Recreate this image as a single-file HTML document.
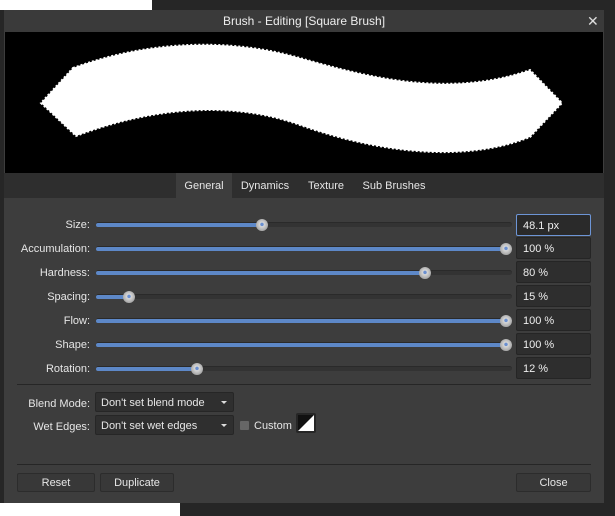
<!DOCTYPE html><html><head><style>
*{margin:0;padding:0;box-sizing:border-box}
body{width:615px;height:516px;background:#262626;position:relative;overflow:hidden;font-family:"Liberation Sans",sans-serif;font-size:11px;color:#e6e6e6}
.a{position:absolute}
.lbl{position:absolute;right:525px;text-align:right;white-space:nowrap}
.tr{position:absolute;left:96px;width:416px;height:5px;background:#333;border-radius:3px;border-top:1px solid #2a2a2a}
.fill{position:absolute;left:0;top:0;height:4px;background:#5d88c8;border-radius:2px}
.th{position:absolute;width:12px;height:12px;border-radius:50%;background:radial-gradient(circle at 50% 45%,#6a8fd0 0 1.5px,#d8d8d8 2px,#aaa 6px);top:-4px}
.in{position:absolute;left:516px;width:75px;height:22px;background:#2e2e2e;border:1px solid #252525;border-radius:2px;padding:5px 6px 0;color:#eee}
.btn{position:absolute;height:19px;top:473px;background:#383838;border:1px solid #2c2c2c;border-radius:2px;text-align:center;line-height:18px}
.dd{position:absolute;left:95px;height:20px;background:#2f2f2f;border:1px solid #262626;border-radius:2px;padding:4px 5px 0}
.dd:after{content:"";position:absolute;right:6px;top:8px;border:3px solid transparent;border-top:3px solid #ddd}
.tab{position:absolute;top:173px;height:25px;line-height:27px;text-align:center}
</style></head><body>
<div class="a" style="left:0;top:0;width:152px;height:10px;background:#fff"></div>
<div class="a" style="left:0;top:503px;width:180px;height:13px;background:#fff"></div>
<div class="a" style="left:4px;top:10px;width:600px;height:493px;background:#3d3d3d"></div>
<div class="a" style="left:4px;top:10px;width:600px;height:22px;background:#3a3a3a;text-align:center;line-height:23px;font-size:12px;color:#eee">Brush - Editing [Square Brush]</div>
<div class="a" style="left:587px;top:13px;font-size:14px;color:#ddd">✕</div>
<svg class="a" style="left:5px;top:32px" width="598" height="141"><rect width="598" height="141" fill="#000"/>
<path transform="translate(-5,-32)" d="M73,68 C150,40 230,38 300,58 S450,98 530,70 L562,103 L530,137 C460,165 370,150 300,125 S150,108 76,136 L41,103 Z" fill="#fff" stroke="#fff" stroke-width="2" stroke-dasharray="2 2"/></svg>
<div class="a" style="left:4px;top:173px;width:600px;height:25px;background:#2e2e2e"></div>
<div class="tab" style="left:176px;width:56px;background:#3d3d3d">General</div>
<div class="tab" style="left:232px;width:66px">Dynamics</div>
<div class="tab" style="left:298px;width:56px">Texture</div>
<div class="tab" style="left:354px;width:80px">Sub Brushes</div>

<div class="lbl" style="top:219px">Size:</div><div class="tr" style="top:222px"><div class="fill" style="width:166px"></div><div class="th" style="left:160px"></div></div><div class="in" style="top:214px;border-color:#6d95d6;background:#2a2a2a">48.1 px</div>
<div class="lbl" style="top:243px">Accumulation:</div><div class="tr" style="top:246px"><div class="fill" style="width:410px"></div><div class="th" style="left:404px"></div></div><div class="in" style="top:237px">100 %</div>
<div class="lbl" style="top:267px">Hardness:</div><div class="tr" style="top:270px"><div class="fill" style="width:329px"></div><div class="th" style="left:323px"></div></div><div class="in" style="top:261px">80 %</div>
<div class="lbl" style="top:291px">Spacing:</div><div class="tr" style="top:294px"><div class="fill" style="width:33px"></div><div class="th" style="left:27px"></div></div><div class="in" style="top:285px">15 %</div>
<div class="lbl" style="top:315px">Flow:</div><div class="tr" style="top:318px"><div class="fill" style="width:410px"></div><div class="th" style="left:404px"></div></div><div class="in" style="top:309px">100 %</div>
<div class="lbl" style="top:339px">Shape:</div><div class="tr" style="top:342px"><div class="fill" style="width:410px"></div><div class="th" style="left:404px"></div></div><div class="in" style="top:333px">100 %</div>
<div class="lbl" style="top:363px">Rotation:</div><div class="tr" style="top:366px"><div class="fill" style="width:101px"></div><div class="th" style="left:95px"></div></div><div class="in" style="top:357px">12 %</div>

<div class="a" style="left:17px;top:384px;width:574px;height:1px;background:#262626"></div>
<div class="lbl" style="top:398px">Blend Mode:</div><div class="dd" style="top:392px;width:139px">Don't set blend mode</div>
<div class="lbl" style="top:421px">Wet Edges:</div><div class="dd" style="top:415px;width:139px">Don't set wet edges</div>
<div class="a" style="left:240px;top:421px;width:9px;height:9px;background:#666;border-radius:1px"></div>
<div class="a" style="left:254px;top:420px">Custom</div>
<div class="a" style="left:296px;top:413px;width:20px;height:20px;background:#262626;border-radius:2px;padding:2px"><svg width="16" height="16"><rect width="16" height="16" fill="#111"/><path d="M16,0 L16,16 L0,16Z" fill="#fff"/></svg></div>
<div class="a" style="left:17px;top:464px;width:574px;height:1px;background:#262626"></div>
<div class="btn" style="left:17px;width:78px">Reset</div>
<div class="btn" style="left:100px;width:74px">Duplicate</div>
<div class="btn" style="left:516px;width:75px">Close</div>
</body></html>
